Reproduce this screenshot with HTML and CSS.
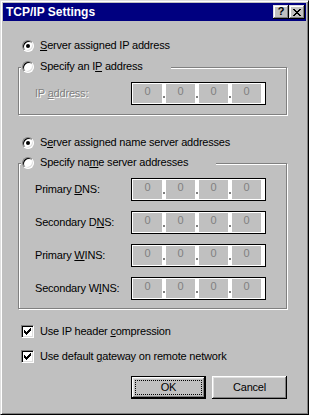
FILE: index.html
```html
<!DOCTYPE html>
<html lang="en">

<head>
    <meta charset="UTF-8">
    <title>TCP/IP Settings</title>
    <link rel="stylesheet" href="styles.css">
</head>

<body>
    <div class="window">
        <div class="titlebar">
            <span class="title">TCP/IP Settings</span>
            <div class="title-buttons">
                <button class="tbtn help">?</button>
                <button class="tbtn close">
                    <svg width="8" height="7" viewBox="0 0 8 7" shape-rendering="crispEdges">
                        <path d="M0 0h2v1h-2zM6 0h2v1h-2zM1 1h2v1h-2zM5 1h2v1h-2zM2 2h4v1h-4zM3 3h2v1h-2zM2 4h4v1h-4zM1 5h2v1h-2zM5 5h2v1h-2zM0 6h2v1h-2zM6 6h2v1h-2z" fill="#000" />
                    </svg>
                </button>
            </div>
        </div>

        <div class="content">
            <label class="option row-first"><span class="radio checked"></span><span><u>S</u>erver assigned IP address</span></label>

            <div class="group group-ip">
                <label class="option group-head"><span class="radio"></span><span>Specify an I<u>P</u> address</span></label>
                <div class="fields">
                    <div class="field-row">
                        <span class="field-label disabled">IP <u>a</u>ddress:</span>
                        <div class="ip">
                            <span class="cell">0</span><span class="dot"></span><span class="cell">0</span><span class="dot"></span><span class="cell">0</span><span class="dot"></span><span class="cell">0</span>
                        </div>
                    </div>
                </div>
            </div>

            <label class="option row-dns"><span class="radio checked"></span><span>S<u>e</u>rver assigned name server addresses</span></label>

            <div class="group group-dns">
                <label class="option group-head"><span class="radio"></span><span>Specify na<u>m</u>e server addresses</span></label>
                <div class="fields">
                    <div class="field-row">
                        <span class="field-label">Primary <u>D</u>NS:</span>
                        <div class="ip">
                            <span class="cell">0</span><span class="dot"></span><span class="cell">0</span><span class="dot"></span><span class="cell">0</span><span class="dot"></span><span class="cell">0</span>
                        </div>
                    </div>
                    <div class="field-row">
                        <span class="field-label">Secondary D<u>N</u>S:</span>
                        <div class="ip">
                            <span class="cell">0</span><span class="dot"></span><span class="cell">0</span><span class="dot"></span><span class="cell">0</span><span class="dot"></span><span class="cell">0</span>
                        </div>
                    </div>
                    <div class="field-row">
                        <span class="field-label">Primary <u>W</u>INS:</span>
                        <div class="ip">
                            <span class="cell">0</span><span class="dot"></span><span class="cell">0</span><span class="dot"></span><span class="cell">0</span><span class="dot"></span><span class="cell">0</span>
                        </div>
                    </div>
                    <div class="field-row">
                        <span class="field-label">Secondary W<u>I</u>NS:</span>
                        <div class="ip">
                            <span class="cell">0</span><span class="dot"></span><span class="cell">0</span><span class="dot"></span><span class="cell">0</span><span class="dot"></span><span class="cell">0</span>
                        </div>
                    </div>
                </div>
            </div>

            <label class="option checkrow row-comp"><span class="check"><svg width="7" height="7" viewBox="0 0 7 7" shape-rendering="crispEdges"><path d="M6 0h1v1h-1zM5 1h2v1h-2zM0 2h1v1h-1zM4 2h3v1h-3zM0 3h2v1h-2zM3 3h3v1h-3zM0 4h5v1h-5zM1 5h3v1h-3zM2 6h1v1h-1z" fill="#000" /></svg></span><span>Use IP header <u>c</u>ompression</span></label>
            <label class="option checkrow row-gw"><span class="check"><svg width="7" height="7" viewBox="0 0 7 7" shape-rendering="crispEdges"><path d="M6 0h1v1h-1zM5 1h2v1h-2zM0 2h1v1h-1zM4 2h3v1h-3zM0 3h2v1h-2zM3 3h3v1h-3zM0 4h5v1h-5zM1 5h3v1h-3zM2 6h1v1h-1z" fill="#000" /></svg></span><span>Use default <u>g</u>ateway on remote network</span></label>

            <div class="buttons">
                <button class="btn default"><span class="focus">OK</span></button>
                <button class="btn">Cancel</button>
            </div>
        </div>
    </div>
</body>

</html>
```

FILE: styles.css
```css
html,
body {
    margin: 0;
    padding: 0;
    background: #c0c0c0;
}

body {
    font: normal 11px/13px "Liberation Sans", Arial, sans-serif;
    letter-spacing: -0.2px;
    color: #000;
}

u {
    text-decoration: underline;
    text-underline-offset: 1px;
}

.window {
    width: 309px;
    height: 415px;
    box-sizing: border-box;
    background: #c0c0c0;
    border: 1px solid;
    border-color: #dfdfdf #000 #000 #dfdfdf;
    box-shadow: inset 1px 1px #fff, inset -1px -1px #808080;
    padding: 2px;
}

/* title bar */

.titlebar {
    height: 18px;
    background: #000080;
    display: flex;
    align-items: center;
    justify-content: space-between;
    padding: 0 1px 0 3px;
}

.title {
    color: #fff;
    font-weight: bold;
    font-size: 12px;
    letter-spacing: 0;
}

.title-buttons {
    display: flex;
}

.tbtn {
    appearance: none;
    width: 16px;
    height: 14px;
    padding: 0;
    border: none;
    background: #c0c0c0;
    box-shadow: inset -1px -1px #000, inset 1px 1px #dfdfdf, inset -2px -2px #808080, inset 2px 2px #fff;
    display: flex;
    align-items: center;
    justify-content: center;
    font: bold 11px/1 "Liberation Sans", Arial, sans-serif;
    color: #000;
}

.tbtn.help {
    padding-bottom: 1px;
}

/* dialog body */

.content {
    padding: 0 19px 0 15px;
}

.option {
    display: flex;
    align-items: center;
    gap: 6px;
    height: 13px;
    padding-left: 4px;
}

.row-first {
    margin-top: 18px;
}

.row-dns {
    margin-top: 21px;
}

.radio {
    width: 12px;
    height: 12px;
    box-sizing: border-box;
    border-radius: 50%;
    border: 1px solid;
    border-color: #808080 #fff #fff #808080;
    box-shadow: inset 1px 1px #000, inset -1px -1px #dfdfdf;
    background: #fff;
    display: flex;
    align-items: center;
    justify-content: center;
    flex: none;
}

.radio.checked::after {
    content: "";
    width: 4px;
    height: 4px;
    border-radius: 50%;
    background: #000;
}

/* etched group boxes */

.group {
    border: 1px solid #808080;
    box-shadow: inset 1px 1px #fff, 1px 1px 0 #fff;
}

.group-ip {
    margin-top: 15px;
}

.group-dns {
    margin-top: 14px;
}

.group-head {
    width: fit-content;
    margin: -8px 0 0 2px;
    padding: 0 28px 0 1px;
    background: #c0c0c0;
}

.fields {
    display: flex;
    flex-direction: column;
    gap: 10px;
    padding: 9px 20px 9px 16px;
}

.group-dns .fields {
    padding-bottom: 8px;
}

.field-row {
    display: flex;
    align-items: center;
}

.field-label {
    flex: 1;
}

.field-label.disabled {
    color: #808080;
    text-shadow: 1px 1px 0 #fff;
}

.ip {
    display: flex;
    width: 135px;
    height: 23px;
    box-sizing: border-box;
    border: 1px solid #000;
    background: #fff;
    padding: 1px 4px 1px 1px;
}

.ip .cell {
    width: 29px;
    background: #c0c0c0;
    color: #808080;
    text-align: center;
    padding-top: 1px;
}

.ip .dot {
    width: 4px;
}

.ip .dot::before {
    content: "";
    display: block;
    width: 2px;
    height: 2px;
    margin: 12px 0 0 1px;
    background: #808080;
}

/* check boxes */

.checkrow {
    padding-left: 3px;
}

.row-comp {
    margin-top: 16px;
}

.row-gw {
    margin-top: 12px;
}

.check {
    width: 13px;
    height: 13px;
    box-sizing: border-box;
    border: 1px solid;
    border-color: #808080 #fff #fff #808080;
    box-shadow: inset 1px 1px #000, inset -1px -1px #dfdfdf;
    background: #fff;
    display: flex;
    align-items: center;
    justify-content: center;
    flex: none;
}

.check svg {
    display: block;
}

/* push buttons */

.buttons {
    display: flex;
    justify-content: flex-end;
    gap: 6px;
    margin-top: 13px;
}

.btn {
    appearance: none;
    width: 75px;
    height: 23px;
    padding: 0;
    border: none;
    background: #c0c0c0;
    box-shadow: inset -1px -1px #000, inset 1px 1px #fff, inset -2px -2px #808080, inset 2px 2px #dfdfdf;
    font: 11px/13px "Liberation Sans", Arial, sans-serif;
    letter-spacing: -0.2px;
    color: #000;
}

.btn.default {
    display: flex;
    padding: 4px;
    box-shadow: inset 0 0 0 1px #000, inset -2px -2px #000, inset 2px 2px #fff, inset -3px -3px #808080, inset 3px 3px #dfdfdf;
}

.btn .focus {
    flex: 1;
    display: flex;
    align-items: center;
    justify-content: center;
    border: 1px dotted #000;
}
```
